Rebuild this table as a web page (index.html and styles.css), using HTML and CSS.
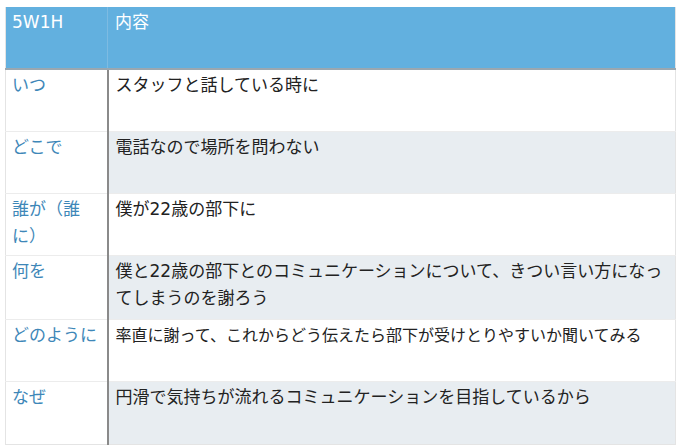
FILE: index.html
```html
<!DOCTYPE html>
<html lang="ja">
<head>
<meta charset="utf-8">
<link rel="stylesheet" href="styles.css">
</head>
<body>
<table class="tbl">
  <thead>
    <tr>
      <th class="c1">5W1H</th>
      <th class="c2">内容</th>
    </tr>
  </thead>
  <tbody>
    <tr>
      <td class="c1">いつ</td>
      <td class="c2">スタッフと話している時に</td>
    </tr>
    <tr class="alt">
      <td class="c1">どこで</td>
      <td class="c2">電話なので場所を問わない</td>
    </tr>
    <tr>
      <td class="c1">誰が（誰に）</td>
      <td class="c2">僕が22歳の部下に</td>
    </tr>
    <tr class="alt tall">
      <td class="c1">何を</td>
      <td class="c2">僕と22歳の部下とのコミュニケーションについて、きつい言い方になってしまうのを謝ろう</td>
    </tr>
    <tr class="short">
      <td class="c1">どのように</td>
      <td class="c2 small">率直に謝って、これからどう伝えたら部下が受けとりやすいか聞いてみる</td>
    </tr>
    <tr class="alt last">
      <td class="c1">なぜ</td>
      <td class="c2">円滑で気持ちが流れるコミュニケーションを目指しているから</td>
    </tr>
  </tbody>
</table>
</body>
</html>
```

FILE: styles.css
```css
html, body {
  margin: 0;
  padding: 0;
  background: #ffffff;
}
body {
  padding: 7px 4px 0 5px;
  font-family: "DejaVu Sans", "Noto Sans CJK JP", sans-serif;
  font-size: 17px;
  line-height: 27px;
}
.tbl {
  width: 671px;
  border-collapse: collapse;
  table-layout: fixed;
  border-left: 1px solid #e4e4e4;
  border-right: 1px solid #e4e4e4;
  border-bottom: 1px solid #e4e4e4;
}
.tbl th,
.tbl td {
  vertical-align: top;
  text-align: left;
  font-weight: normal;
  padding: 2px 7px 0 7px;
  height: 62px;
  box-sizing: border-box;
}
.tbl th.c1, .tbl td.c1 {
  width: 102px;
}
.tbl thead th {
  background: #62b0df;
  color: #ffffff;
  height: 62px;
  border-bottom: 2px solid #9aa7b0;
}
.tbl thead th.c1 {
  border-right: 1px solid #7dbbe2;
  padding-left: 6px;
}
.tbl tbody td {
  border-top: 1px solid #ececec;
  color: #222222;
}
.tbl tbody tr:first-child td {
  border-top: none;
}
.tbl tbody td.c1 {
  color: #3e87b8;
  background: #ffffff;
  border-right: 2px solid #8a8a8a;
  padding-left: 6px;
}
.tbl tbody tr.alt td.c2 {
  background: #e8edf1;
}
.tbl tbody tr.tall td {
  height: 64px;
}
.tbl tbody tr.last td {
  height: 63px;
}
.tbl tbody td.small {
  font-size: 16px;
}
```
